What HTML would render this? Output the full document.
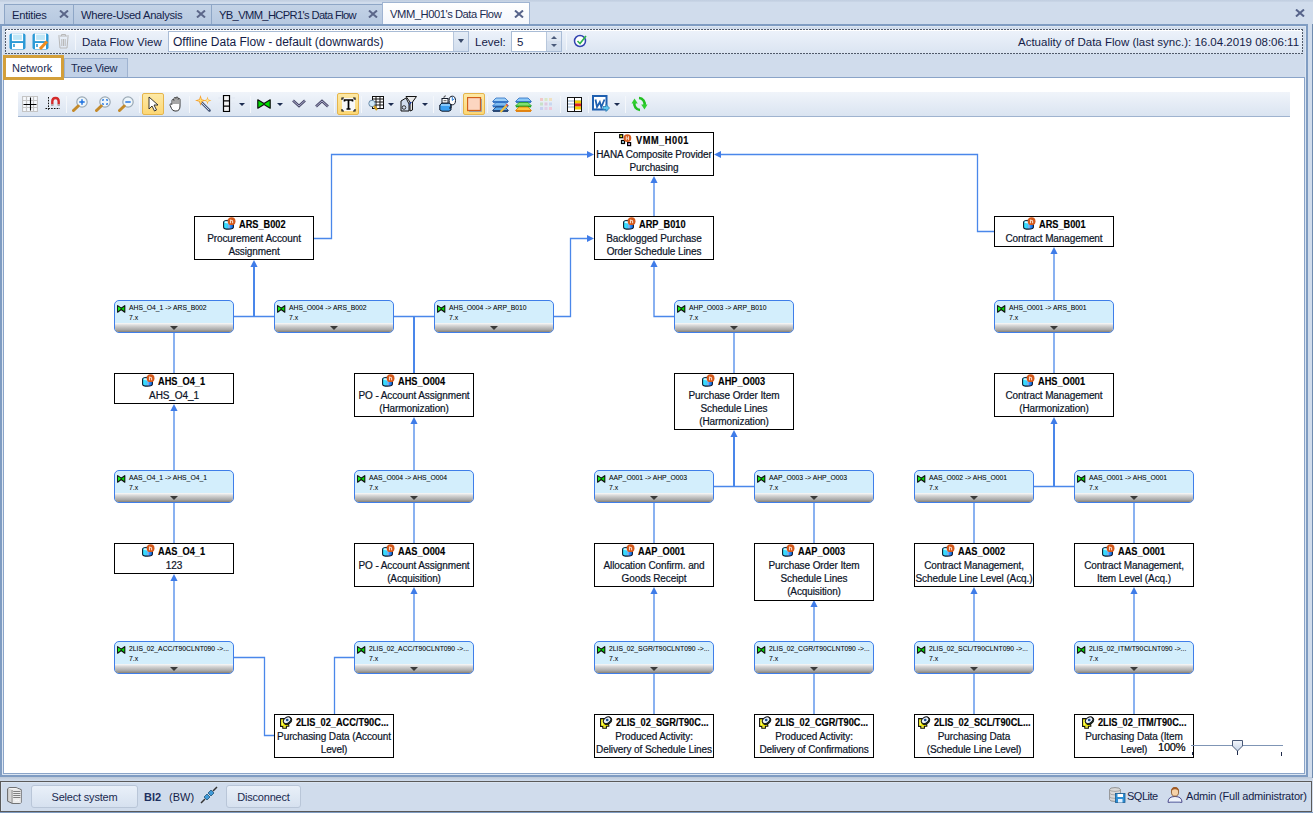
<!DOCTYPE html>
<html><head><meta charset="utf-8">
<style>
*{box-sizing:border-box;margin:0;padding:0}
html,body{width:1313px;height:813px;overflow:hidden}
body{position:relative;background:#d0dcec;font-family:"Liberation Sans",sans-serif;color:#1e2a4a}
.a{position:absolute}
/* tabs */
.tab{position:absolute;top:4px;height:21px;background:linear-gradient(#c3d2e6,#b6c8e0);border:1px solid #8ea6c6;border-bottom:none;font-size:11.2px;color:#141e4a;line-height:21px;padding-left:7px;white-space:nowrap}
.tab .x{position:absolute;top:5px}
.tab.act{top:2px;height:23px;background:linear-gradient(#ffffff,#f3f6fb);border-color:#9fb4d2;color:#1a2a50;line-height:23px}
/* panel */
#panel{position:absolute;left:0;top:24px;width:1308px;height:753px;border:2px solid #7f9cc2;background:#d0dcec;box-shadow:inset 0 0 0 1px #dce6f2}
#tb1{position:absolute;left:5px;top:29px;width:1298px;height:25px;background:repeating-linear-gradient(90deg,#505a6a 0 2px,transparent 2px 3px) left top/100% 1px no-repeat,repeating-linear-gradient(90deg,#505a6a 0 2px,transparent 2px 3px) left bottom/100% 1px no-repeat,repeating-linear-gradient(180deg,#505a6a 0 2px,transparent 2px 3px) left top/1px 100% no-repeat,repeating-linear-gradient(180deg,#505a6a 0 2px,transparent 2px 3px) right top/1px 100% no-repeat,linear-gradient(#ffffff,#ffffff) left 1px/100% 1px no-repeat,linear-gradient(#eef3fb,#dae4f1)}
.lbl{position:absolute;font-size:11.5px;color:#141c48;white-space:nowrap}
#combo{position:absolute;left:168px;top:31px;width:301px;height:21px;background:#fff;border:1px solid #a9bcd6}
#combo .dd{position:absolute;right:0;top:0;width:15px;height:19px;background:linear-gradient(#e4ecf6,#d2deee);border-left:1px solid #b7c7dc}
.tri{position:absolute;width:0;height:0;border-left:3.5px solid transparent;border-right:3.5px solid transparent;border-top:4px solid #3a4a6a}
#spin{position:absolute;left:511px;top:31px;width:51px;height:21px;background:#fff;border:1px solid #a9bcd6}
#spin .sb{position:absolute;right:0;top:0;width:15px;height:19px;background:linear-gradient(#e8eef7 0,#dde6f2 50%,#d6e0ee 50%,#d0dcec 100%);border-left:1px solid #b7c7dc}
.sep{position:absolute;width:1px;background:#a8b9d2;border-right:1px solid #f4f7fb}
/* view tabs */
#vtabs{position:absolute;left:2px;top:55px;width:1306px;height:23px}
#tnet{position:absolute;left:3px;top:55px;width:61px;height:25px;border:3px solid #d39f3a;background:#fff;font-size:11px;color:#1a2a50;line-height:20px;padding-left:6px;z-index:3}
#ttree{position:absolute;left:64px;top:58px;width:64px;height:20px;background:#c1d1e7;border:1px solid #9fb3d0;border-bottom:none;font-size:11px;color:#1a2a50;line-height:19px;padding-left:6px;letter-spacing:-0.3px}
#white{position:absolute;left:3px;top:77px;width:1302px;height:697px;background:#fff;border:1px solid #8aa4c8}
#tb2{position:absolute;left:18px;top:92px;width:1272px;height:25px;background:linear-gradient(#f0f4fa,#dae4f1);border-bottom:1px solid #9fb3cf}
.hl{position:absolute;top:93px;width:22px;height:22px;background:linear-gradient(#fde9a6,#fcd775);border:1px solid #e5b54c;border-radius:2px}
.ic2{position:absolute;top:96px}
/* diagram */
svg#ln{position:absolute;left:0;top:0}
svg#ln path{fill:none;stroke:#4a87ea;stroke-width:1.3}
svg#ln path.ah{fill:#3f7ce8;stroke:none}
svg#ln path.db{stroke-width:2;stroke:#4a87ea}
.nd{position:absolute;width:120px;background:#fff;border:1px solid #000;text-align:center;font-size:10px;color:#0c1428;line-height:13px;-webkit-text-stroke:0.2px #0c1428}
.nd .tt{height:15px;line-height:13px;padding-top:0px;white-space:nowrap}
.nd .tt b{display:inline-block;font-size:10px;color:#000;vertical-align:top;position:relative;top:0.5px;transform:scaleX(0.92);transform-origin:0 0;-webkit-text-stroke:0.15px #000}
.nd .ic{display:inline-block;vertical-align:top;margin-top:1px;margin-right:3px}
.nd .ds{white-space:nowrap;letter-spacing:-0.1px}
.tr{position:absolute;width:120px;height:33px;border:1px solid #3f7ee9;border-radius:5px;background:#d3eefc;overflow:hidden}
.tr .ti{position:absolute;left:2px;top:3.5px}
.tr .tl{position:absolute;left:14px;top:2px;font-size:6.8px;color:#000;white-space:nowrap;line-height:9px;-webkit-text-stroke:0.05px #000}
.tr .tv{position:absolute;left:14px;top:12px;font-size:6.8px;color:#000;line-height:9px;-webkit-text-stroke:0.05px #000}
.tr .tg{position:absolute;left:0;top:22px;width:118px;height:9px;background:linear-gradient(#fafafa,#d4d4d4 30%,#a8a8a8 75%,#8a8274)}
.tr .tg i{position:absolute;left:55px;top:3px;width:0;height:0;border-left:4px solid transparent;border-right:4px solid transparent;border-top:4px solid #3a3a3a}
/* status */
#status{position:absolute;left:0;top:781px;width:1312px;height:31px;border:1px solid #5a5a5a;background:#d0dcec;box-shadow:inset 1px 1px 0 #dbe5f1}
.btn{position:absolute;top:785px;height:23px;border:1px solid #b9c6d8;border-radius:3px;background:linear-gradient(#e9f0f9,#d6e1ef);font-size:11px;color:#1a2a50;text-align:center;line-height:22px;letter-spacing:-0.2px}
</style></head><body>
<!-- tabs -->
<div class="a" style="left:0;top:0;width:1313px;height:2px;background:linear-gradient(#c0cde0,#cad6e7)"></div>
<div class="tab" style="left:4px;width:70px;letter-spacing:-0.25px">Entities<svg class="x" style="left:54px" width="10" height="8" viewBox="0 0 10 8"><path d="M1 0.5 L9 7.5 M9 0.5 L1 7.5" stroke="#5b6689" stroke-width="2"/></svg></div>
<div class="tab" style="left:73px;width:139px;letter-spacing:-0.3px">Where-Used Analysis<svg class="x" style="left:122px" width="10" height="8" viewBox="0 0 10 8"><path d="M1 0.5 L9 7.5 M9 0.5 L1 7.5" stroke="#5b6689" stroke-width="2"/></svg></div>
<div class="tab" style="left:211px;width:172px;letter-spacing:-0.65px">YB_VMM_HCPR1's Data Flow<svg class="x" style="left:156px" width="10" height="8" viewBox="0 0 10 8"><path d="M1 0.5 L9 7.5 M9 0.5 L1 7.5" stroke="#5b6689" stroke-width="2"/></svg></div>
<div class="tab act" style="left:382px;width:148px;letter-spacing:-0.45px">VMM_H001's Data Flow<svg class="x" style="left:131px;top:7px" width="10" height="8" viewBox="0 0 10 8"><path d="M1 0.5 L9 7.5 M9 0.5 L1 7.5" stroke="#56638a" stroke-width="2"/></svg></div>
<svg class="a" style="left:1295px;top:9px" width="10" height="8" viewBox="0 0 10 8"><path d="M1 0.5 L9 7.5 M9 0.5 L1 7.5" stroke="#56638a" stroke-width="2"/></svg>
<div class="a" style="left:1312px;top:24px;width:1px;height:754px;background:#6f8cb0"></div>

<div id="panel"></div>
<div id="tb1"></div>
<!-- save icons -->
<svg class="a" style="left:9px;top:33px" width="17" height="17" viewBox="0 0 17 17"><rect x="0.5" y="0.5" width="16" height="16" rx="2" fill="#2c9ad6"/><rect x="3.5" y="1" width="10" height="6.5" fill="#bfe6f7" stroke="#fff" stroke-width="1.2"/><rect x="3" y="10" width="11" height="6" fill="#fff"/><rect x="4.2" y="11" width="1.6" height="3" fill="#2c9ad6"/></svg>
<svg class="a" style="left:32px;top:33px" width="17" height="17" viewBox="0 0 17 17"><rect x="0.5" y="0.5" width="16" height="16" rx="2" fill="#2c9ad6"/><rect x="3.5" y="1" width="10" height="6.5" fill="#bfe6f7" stroke="#fff" stroke-width="1.2"/><rect x="3" y="10" width="11" height="6" fill="#fff"/><rect x="4.2" y="11" width="1.6" height="3" fill="#2c9ad6"/><path d="M8 16 L15 8.5" stroke="#f08c1c" stroke-width="3"/></svg>
<svg class="a" style="left:57px;top:33px" width="13" height="16" viewBox="0 0 13 16"><path d="M1 3 H12 M4.5 3 V1.5 H8.5 V3 M2 4 L3 15 H10 L11 4 M4.8 6 V13 M6.5 6 V13 M8.2 6 V13" stroke="#b8b8b8" stroke-width="1" fill="none"/></svg>
<div class="sep" style="left:75px;top:33px;height:17px"></div>
<div class="lbl" style="left:82px;top:36px">Data Flow View</div>
<div id="combo"><div class="lbl" style="left:4px;top:3px;font-size:12px">Offline Data Flow - default (downwards)</div><div class="dd"><div class="tri" style="left:4px;top:7px"></div></div></div>
<div class="lbl" style="left:475px;top:36px">Level:</div>
<div id="spin"><div class="lbl" style="left:5px;top:4px;font-size:11.5px">5</div><div class="sb"><div class="tri" style="left:4px;top:4px;border-top:none;border-bottom:3px solid #4a5a7a;border-left-width:3px;border-right-width:3px"></div><div class="tri" style="left:4px;top:12px;border-top-width:3px;border-top-color:#4a5a7a;border-left-width:3px;border-right-width:3px"></div></div></div>
<div class="sep" style="left:566px;top:33px;height:17px"></div>
<svg class="a" style="left:573px;top:33px" width="15" height="15" viewBox="0 0 15 15"><circle cx="7" cy="8" r="5.5" fill="#fff" stroke="#3244b0" stroke-width="1.5"/><path d="M4.5 8 L7 10.5 L13 3" stroke="#2db44a" stroke-width="1.6" fill="none"/></svg>
<div class="lbl" style="left:1018px;top:36px;font-size:11.5px">Actuality of Data Flow (last sync.): 16.04.2019 08:06:11</div>

<div id="ttree">Tree View</div>
<div id="white"></div>
<div id="tnet">Network</div>

<!-- diagram toolbar -->
<div id="tb2"></div>
<svg class="a" style="left:22px;top:96px" width="16" height="16" viewBox="0 0 16 16"><rect x="0.5" y="0.5" width="15" height="15" fill="#f6f9fd"/><path d="M0.5 0.5 H15.5 V15.5 H0.5 Z M4.5 0.5 V15.5 M11.5 0.5 V15.5 M0.5 4.5 H15.5 M0.5 11.5 H15.5" stroke="#c4c4c4" stroke-width="1.2" fill="none"/><path d="M8.5 1.5 V14.5 M1.5 8.5 H14.5" stroke="#000" stroke-width="1.1"/></svg>
<svg class="a" style="left:45px;top:96px" width="16" height="16" viewBox="0 0 16 16"><path d="M3.5 1 V15 M0.5 12.5 H15" stroke="#111" stroke-width="1" stroke-dasharray="1.6 1.2" fill="none"/><path d="M7.3 8.5 V5.5 Q7.3 2 10.5 2 Q13.7 2 13.7 5.5 V8.5" stroke="#d42a2a" stroke-width="2.4" fill="none"/><path d="M7.3 8.2 V10 M13.7 8.2 V10" stroke="#a8a8a8" stroke-width="2.4"/></svg>
<div class="sep" style="left:66px;top:96px;height:17px"></div>
<svg class="a" style="left:72px;top:96px" width="16" height="16" viewBox="0 0 16 16"><circle cx="10" cy="6" r="5.2" fill="#eef6fb" stroke="#9aa8b4" stroke-width="1.2"/><path d="M6.2 10 L1.5 14.5" stroke="#c48a2a" stroke-width="3" stroke-linecap="round"/><path d="M10 3.3 V8.7 M7.3 6 H12.7" stroke="#1a6fe0" stroke-width="1.4"/></svg>
<svg class="a" style="left:95px;top:96px" width="16" height="16" viewBox="0 0 16 16"><circle cx="10" cy="6" r="5.2" fill="#eef6fb" stroke="#9aa8b4" stroke-width="1.2"/><path d="M6.2 10 L1.5 14.5" stroke="#c48a2a" stroke-width="3" stroke-linecap="round"/><path d="M7.8 5 V3.8 H9 M11 3.8 H12.2 V5 M12.2 7 V8.2 H11 M9 8.2 H7.8 V7" stroke="#1a6fe0" stroke-width="1.1" fill="none"/></svg>
<svg class="a" style="left:118px;top:96px" width="16" height="16" viewBox="0 0 16 16"><circle cx="10" cy="6" r="5.2" fill="#eef6fb" stroke="#9aa8b4" stroke-width="1.2"/><path d="M6.2 10 L1.5 14.5" stroke="#c48a2a" stroke-width="3" stroke-linecap="round"/><path d="M7.3 6 H12.7" stroke="#1a6fe0" stroke-width="1.4"/></svg>
<div class="sep" style="left:139px;top:96px;height:17px"></div>
<div class="hl" style="left:142px"></div>
<svg class="a" style="left:146px;top:96px" width="14" height="16" viewBox="0 0 14 16"><path d="M3 1 L3 13 L6 10 L8.5 15 L10.5 14 L8 9 L12 9 Z" fill="#fff" stroke="#222" stroke-width="0.9"/></svg>
<svg class="a" style="left:169px;top:96px" width="14" height="16" viewBox="0 0 14 16"><path d="M3 8.5 L3 4.5 Q3 3.5 4 3.5 Q5 3.5 5 4.5 L5 2.5 Q5 1.5 6 1.5 Q7 1.5 7 2.5 L7 2 Q7 1 8 1 Q9 1 9 2 L9 3.5 Q9 2.5 10 2.5 Q11 2.5 11 3.5 L11 10 Q11 15 7 15 L6 15 Q3.5 15 2.5 12.5 L1 9.2 Q0.7 8.2 1.5 8 Q2.4 7.8 3 8.5 Z" fill="#fff" stroke="#222" stroke-width="0.9"/><path d="M5 4.5 V8 M7 2.5 V8 M9 3.5 V8" stroke="#222" stroke-width="0.8"/></svg>
<div class="sep" style="left:189px;top:96px;height:17px"></div>
<svg class="a" style="left:195px;top:95px" width="17" height="17" viewBox="0 0 17 17"><path d="M6 7 L14.5 15.5" stroke="#4a5a7a" stroke-width="2.6" stroke-linecap="round"/><path d="M6 7 L14 15" stroke="#c8d4ea" stroke-width="1"/><path d="M5.5 0 L6.8 4.2 L11 5.5 L6.8 6.8 L5.5 11 L4.2 6.8 L0 5.5 L4.2 4.2 Z" fill="#f6a030"/><path d="M5.5 2.5 L6.2 4.8 L8.5 5.5 L6.2 6.2 L5.5 8.5 L4.8 6.2 L2.5 5.5 L4.8 4.8 Z" fill="#ffe070"/><path d="M12.5 1.5 L13.4 4.6 L16.5 5.5 L13.4 6.4 L12.5 9.5 L11.6 6.4 L8.5 5.5 L11.6 4.6 Z" fill="#f8b040"/><path d="M12.5 3.5 L13 5 L14.5 5.5 L13 6 L12.5 7.5 L12 6 L10.5 5.5 L12 5 Z" fill="#fff0a0"/></svg>
<svg class="a" style="left:218px;top:95px" width="17" height="17" viewBox="0 0 17 17"><path d="M0.5 3 H4 M13 3 H16.5 M0.5 8.5 H4 M13 8.5 H16.5 M0.5 14 H4 M13 14 H16.5" stroke="#e4eaf4" stroke-width="1.2"/><path d="M1.5 2 L0.5 3 L1.5 4 M15.5 2 L16.5 3 L15.5 4 M1.5 7.5 L0.5 8.5 L1.5 9.5 M15.5 7.5 L16.5 8.5 L15.5 9.5 M1.5 13 L0.5 14 L1.5 15 M15.5 13 L16.5 14 L15.5 15" stroke="#e4eaf4" stroke-width="1" fill="none"/><rect x="5.5" y="0.5" width="6" height="16" fill="#f4f4f4" stroke="#000" stroke-width="1.2"/><path d="M5.5 5.8 H11.5 M5.5 11.2 H11.5" stroke="#000" stroke-width="1.2"/></svg>
<div class="tri" style="left:239px;top:103px;border-left-width:3px;border-right-width:3px;border-top-width:3px;border-top-color:#1c2c50"></div>
<div class="sep" style="left:250px;top:96px;height:17px"></div>
<svg class="a" style="left:257px;top:99px" width="14" height="10" viewBox="0 0 14 10"><path d="M0.8 0.8 L7 4.6 L13.2 0.8 L13.2 9.2 L7 5.4 L0.8 9.2 Z" fill="#00e000" stroke="#111" stroke-width="1.2" stroke-linejoin="round"/></svg>
<div class="tri" style="left:277px;top:103px;border-left-width:3px;border-right-width:3px;border-top-width:3px;border-top-color:#1c2c50"></div>
<svg class="a" style="left:292px;top:99px" width="14" height="9" viewBox="0 0 14 9"><path d="M1 1.5 L7 7 L13 1.5" stroke="#4a4a6a" stroke-width="2.6" fill="none"/><path d="M1 1.5 L7 7 L13 1.5" stroke="#a8a8c8" stroke-width="1" fill="none"/></svg>
<svg class="a" style="left:315px;top:99px" width="14" height="9" viewBox="0 0 14 9"><path d="M1 7.5 L7 2 L13 7.5" stroke="#4a4a6a" stroke-width="2.6" fill="none"/><path d="M1 7.5 L7 2 L13 7.5" stroke="#a8a8c8" stroke-width="1" fill="none"/></svg>
<div class="sep" style="left:334px;top:96px;height:17px"></div>
<div class="hl" style="left:337px"></div>
<svg class="a" style="left:341px;top:97px" width="15" height="15" viewBox="0 0 15 15"><rect x="1" y="1" width="13" height="13" fill="#f8f8f8"/><path d="M1 3 V1 H3 M12 1 H14 V3 M14 12 V14 H12 M3 14 H1 V12" stroke="#111" stroke-width="1.2" fill="none"/><path d="M3.5 4.5 V3 H11.5 V4.5 M7.5 3 V12 M5.5 12 H9.5" stroke="#000" stroke-width="1.7" fill="none"/></svg>
<div class="sep" style="left:361px;top:96px;height:17px"></div>
<svg class="a" style="left:368px;top:96px" width="16" height="16" viewBox="0 0 16 16"><rect x="4.5" y="0.5" width="11" height="12" fill="#fff" stroke="#111" stroke-width="1"/><path d="M4.5 3 H15.5 M4.5 6 H15.5 M4.5 9 H15.5 M8 0.5 V12.5 M12 0.5 V12.5" stroke="#111" stroke-width="1"/><circle cx="4" cy="7.5" r="3.2" fill="#cfe8f6" stroke="#6a8aa8" stroke-width="1"/><path d="M6 10 L9 14" stroke="#d0a020" stroke-width="2.2"/></svg>
<div class="tri" style="left:388px;top:103px;border-left-width:3px;border-right-width:3px;border-top-width:3px;border-top-color:#1c2c50"></div>
<svg class="a" style="left:400px;top:96px" width="17" height="16" viewBox="0 0 17 16"><path d="M1 5 L6 2 L9 8 V15 H1 Z" fill="#d0dcec" stroke="#111" stroke-width="1"/><circle cx="4" cy="11.5" r="1.8" fill="none" stroke="#333" stroke-width="1"/><path d="M6 0.5 H16.5 L12.5 6 V14 L10 15 V6 Z" fill="#e8e8e8" stroke="#111" stroke-width="1"/><path d="M10 6 L12 6 L9 10Z" fill="#1a3a9a"/></svg>
<div class="tri" style="left:422px;top:103px;border-left-width:3px;border-right-width:3px;border-top-width:3px;border-top-color:#1c2c50"></div>
<div class="sep" style="left:433px;top:96px;height:17px"></div>
<svg class="a" style="left:439px;top:95px" width="17" height="17" viewBox="0 0 17 17"><path d="M0.8 10 L3 8 H10 L12 10 V15 L10 16.2 H3 L0.8 15 Z" fill="#3a9ef0" stroke="#101828" stroke-width="1"/><path d="M2 10 H11" stroke="#bfe4ff" stroke-width="1.2"/><rect x="3" y="3.5" width="6" height="4.5" fill="#fff" stroke="#101828" stroke-width="1"/><path d="M4.5 5.7 H7.5" stroke="#333" stroke-width="0.8"/><path d="M5 3.5 V1.5 L7 0.8" stroke="#333" stroke-width="0.8" fill="none"/><ellipse cx="13.3" cy="5.5" rx="3.2" ry="4.3" fill="#fff" stroke="#101828" stroke-width="1"/><path d="M13.3 2 V5.5 L15.5 3.5" stroke="#2a80e0" stroke-width="1" fill="none"/><path d="M12 9.5 V13 H10" stroke="#101828" stroke-width="1" fill="none"/></svg>
<div class="sep" style="left:460px;top:96px;height:17px"></div>
<div class="hl" style="left:463px"></div>
<svg class="a" style="left:467px;top:97px" width="15" height="15" viewBox="0 0 15 15"><rect x="0.5" y="0.5" width="13" height="13" fill="#fcd6c0" stroke="#d2601a" stroke-width="1.3"/><path d="M2 14.5 H14.5 V2" stroke="#a0a0a0" stroke-width="1" fill="none"/></svg>
<div class="sep" style="left:487px;top:96px;height:17px"></div>
<svg class="a" style="left:492px;top:97px" width="17" height="16" viewBox="0 0 17 16"><path d="M4 1 H13 L16.5 4.5 H0.5 Z" fill="#9fd0f8" stroke="#2a6cc0" stroke-width="0.8"/><path d="M1 5.2 H16" stroke="#2a6cc0" stroke-width="1.4"/><path d="M4 5.5 H13 L16.5 9 H0.5 Z" fill="#7fbcf0" stroke="#2a6cc0" stroke-width="0.8"/><path d="M1 9.7 H16" stroke="#2a6cc0" stroke-width="1.4"/><path d="M4 10 H13 L16.5 13.5 H0.5 Z" fill="#5aa8ec" stroke="#1a3a6a" stroke-width="0.8"/><path d="M1 14.2 H16" stroke="#1a3a6a" stroke-width="1.4"/><path d="M8.5 15 L15 8" stroke="#f0c040" stroke-width="2"/><path d="M14.5 8.5 L15.5 7.5" stroke="#e04040" stroke-width="2"/></svg>
<svg class="a" style="left:515px;top:97px" width="17" height="16" viewBox="0 0 17 16"><path d="M4 1 H13 L16.5 4.5 H0.5 Z" fill="#8cc8f8" stroke="#2a6cc0" stroke-width="0.8"/><path d="M1 5.2 H16" stroke="#2a6cc0" stroke-width="1.4"/><path d="M4 5.5 H13 L16.5 9 H0.5 Z" fill="#80e070" stroke="#20a020" stroke-width="0.8"/><path d="M1 9.7 H16" stroke="#20a020" stroke-width="1.4"/><path d="M4 10 H13 L16.5 13.5 H0.5 Z" fill="#ffc840" stroke="#e07a00" stroke-width="0.8"/><path d="M1 14.2 H16" stroke="#e07a00" stroke-width="1.4"/></svg>
<svg class="a" style="left:540px;top:98px" width="12" height="12" viewBox="0 0 12 12"><rect x="0" y="0" width="3" height="3" fill="#f0c8c8"/><rect x="4.5" y="0" width="3" height="3" fill="#d8e8c8"/><rect x="9" y="0" width="3" height="3" fill="#f0e0c0"/><rect x="0" y="4.5" width="3" height="3" fill="#c8e0c8"/><rect x="4.5" y="4.5" width="3" height="3" fill="#e0c8e0"/><rect x="9" y="4.5" width="3" height="3" fill="#c8d8f0"/><rect x="0" y="9" width="3" height="3" fill="#c8d0f0"/><rect x="4.5" y="9" width="3" height="3" fill="#e0d0e8"/><rect x="9" y="9" width="3" height="3" fill="#f0c8d8"/></svg>
<div class="sep" style="left:560px;top:96px;height:17px"></div>
<svg class="a" style="left:567px;top:97px" width="15" height="15" viewBox="0 0 15 15"><rect x="0.5" y="0.5" width="14" height="14" fill="#fff" stroke="#111" stroke-width="1"/><path d="M1 4 H14 M1 7 H14 M1 10 H14" stroke="#8aa8c8" stroke-width="1"/><rect x="8" y="3.5" width="6" height="3" fill="#f0d000"/><rect x="8" y="6.5" width="6" height="3" fill="#e02020"/><rect x="8" y="9.5" width="6" height="3" fill="#f0d000"/><path d="M7.5 1 V14" stroke="#111" stroke-width="1"/></svg>
<div class="sep" style="left:588px;top:96px;height:17px"></div>
<svg class="a" style="left:592px;top:95px" width="18" height="17" viewBox="0 0 18 17"><rect x="1" y="1" width="13.5" height="13.5" fill="#fff" stroke="#1e5fb0" stroke-width="2"/><path d="M3.5 4.5 L5 12 L7.8 7 L9.3 12 L12.5 4.5" stroke="#1e5fb0" stroke-width="1.8" fill="none"/><path d="M11 11.5 H14 V9.5 L17.5 13 L14 16.5 V14.5 H11 Z" fill="#60c8f0" stroke="#2a7ab0" stroke-width="0.8"/></svg>
<div class="tri" style="left:614px;top:103px;border-left-width:3px;border-right-width:3px;border-top-width:3px;border-top-color:#1c2c50"></div>
<div class="sep" style="left:625px;top:96px;height:17px"></div>
<svg class="a" style="left:631px;top:96px" width="17" height="16" viewBox="0 0 17 16"><path d="M9 14 A6 6 0 0 1 3.5 6.5" stroke="#22c022" stroke-width="2.6" fill="none"/><path d="M0.5 7.5 L3.5 2.5 L6.8 7.5 Z" fill="#30d030"/><path d="M8 2 A6 6 0 0 1 13.5 9.5" stroke="#22c022" stroke-width="2.6" fill="none"/><path d="M10.2 8.5 L13.5 13.5 L16.5 8.5 Z" fill="#30d030"/></svg>

<svg id="ln" width="1313" height="813">
<defs><linearGradient id="cyl" x1="0" x2="1" y1="0" y2="0"><stop offset="0" stop-color="#30f0ff"/><stop offset="0.45" stop-color="#40c8ff"/><stop offset="0.55" stop-color="#a0b0e0"/><stop offset="0.7" stop-color="#2a8cff"/><stop offset="1" stop-color="#1060d0"/></linearGradient></defs><path class="db" d="M254 316.5 L254 264"/>
<path class="db" d="M414 316.5 L414 373"/>
<path class="db" d="M734 486.5 L734 434"/>
<path class="db" d="M1054 486.5 L1054 421"/>
<path d="M313.5 238.5 L331.5 238.5 L331.5 154.5 L590 154.5"/>
<path d="M654 216 L654 180"/>
<path d="M994 231.5 L977.5 231.5 L977.5 154.5 L719 154.5"/>
<path d="M233.5 316.5 L274 316.5"/>
<path d="M254 316.5 L254 264"/>
<path d="M553.5 316.5 L570.5 316.5 L570.5 238.5 L590 238.5"/>
<path d="M674 316.5 L654 316.5 L654 264"/>
<path d="M1054 300 L1054 251"/>
<path d="M174 333 L174 373"/>
<path d="M393.5 316.5 L434 316.5"/>
<path d="M414 316.5 L414 373"/>
<path d="M734 333 L734 373"/>
<path d="M1054 333 L1054 373"/>
<path d="M174 470 L174 408"/>
<path d="M414 470 L414 421"/>
<path d="M713.5 486.5 L754 486.5"/>
<path d="M734 486.5 L734 434"/>
<path d="M1033.5 486.5 L1074 486.5"/>
<path d="M1054 486.5 L1054 421"/>
<path d="M174 503 L174 543"/>
<path d="M414 503 L414 543"/>
<path d="M654 503 L654 543"/>
<path d="M814 503 L814 543"/>
<path d="M974 503 L974 543"/>
<path d="M1134 503 L1134 543"/>
<path d="M174 641 L174 578"/>
<path d="M414 641 L414 591"/>
<path d="M654 641 L654 591"/>
<path d="M814 641 L814 604"/>
<path d="M974 641 L974 591"/>
<path d="M1134 641 L1134 591"/>
<path d="M233.5 657.5 L264.5 657.5 L264.5 735.5 L274 735.5"/>
<path d="M354 657.5 L334.5 657.5 L334.5 714"/>
<path d="M654 674 L654 714"/>
<path d="M814 674 L814 714"/>
<path d="M974 674 L974 714"/>
<path d="M1134 674 L1134 714"/>
<path class="ah" d="M594 154.5 L587 150.9 L587 158.1 Z"/>
<path class="ah" d="M654 176 L650.4 183 L657.6 183 Z"/>
<path class="ah" d="M714 154.5 L721 150.9 L721 158.1 Z"/>
<path class="ah" d="M254 260 L250.4 267 L257.6 267 Z"/>
<path class="ah" d="M594 238.5 L587 234.9 L587 242.1 Z"/>
<path class="ah" d="M654 260 L650.4 267 L657.6 267 Z"/>
<path class="ah" d="M1054 247 L1050.4 254 L1057.6 254 Z"/>
<path class="ah" d="M174 404 L170.4 411 L177.6 411 Z"/>
<path class="ah" d="M414 417 L410.4 424 L417.6 424 Z"/>
<path class="ah" d="M734 430 L730.4 437 L737.6 437 Z"/>
<path class="ah" d="M1054 417 L1050.4 424 L1057.6 424 Z"/>
<path class="ah" d="M174 574 L170.4 581 L177.6 581 Z"/>
<path class="ah" d="M414 587 L410.4 594 L417.6 594 Z"/>
<path class="ah" d="M654 587 L650.4 594 L657.6 594 Z"/>
<path class="ah" d="M814 600 L810.4 607 L817.6 607 Z"/>
<path class="ah" d="M974 587 L970.4 594 L977.6 594 Z"/>
<path class="ah" d="M1134 587 L1130.4 594 L1137.6 594 Z"/>
</svg>
<div class="nd" style="left:594px;top:132px;height:44px"><div class="tt"><svg class="ic" width="14" height="13" viewBox="0 0 14 13"><rect x="0.7" y="0.7" width="3" height="3" fill="#f4f020" stroke="#000" stroke-width="1.2"/><rect x="2.5" y="6.5" width="3" height="3" fill="#b0e4f8" stroke="#000" stroke-width="1.2"/><rect x="8.6" y="8.6" width="3" height="3" fill="#d8b0f0" stroke="#000" stroke-width="1.2"/><circle cx="8.4" cy="4.1" r="3.9" fill="#d4581a"/><path d="M7.3 6.2 V2.2 M9.5 6.2 V2.2 M7.3 4.2 H9.5" stroke="#f4d8c4" stroke-width="1" fill="none"/></svg><b style="margin-right:-4.61px;letter-spacing:0.6px">VMM_H001</b></div><div class="ds">HANA Composite Provider</div><div class="ds">Purchasing</div></div>
<div class="nd" style="left:194px;top:216px;height:44px"><div class="tt"><svg class="ic" style="margin-top:0" width="13" height="13" viewBox="0 0 13 13"><path d="M0.6 5.2 Q0.6 3.2 5.5 3.2 Q10.4 3.2 10.4 5.2 L10.4 10.2 Q10.4 12.1 5.5 12.1 Q0.6 12.1 0.6 10.2 Z" fill="url(#cyl)" stroke="#0a1a30" stroke-width="1.1"/><path d="M1.6 5.3 Q1.6 4.2 5.5 4.2 Q9.4 4.2 9.4 5.3 Q9.4 6.4 5.5 6.4 Q1.6 6.4 1.6 5.3Z" fill="#e0f4ff"/><circle cx="8.6" cy="4.2" r="3.9" fill="#d4581a"/><path d="M7.5 6.3 V2.6 M7.5 3.9 Q7.8 3.2 8.6 3.2 Q9.6 3.2 9.6 4.2 V6.3" stroke="#f4d8c4" stroke-width="1.1" fill="none"/></svg><b style="margin-right:-4.05px">ARS_B002</b></div><div class="ds">Procurement Account</div><div class="ds">Assignment</div></div>
<div class="nd" style="left:594px;top:216px;height:44px"><div class="tt"><svg class="ic" style="margin-top:0" width="13" height="13" viewBox="0 0 13 13"><path d="M0.6 5.2 Q0.6 3.2 5.5 3.2 Q10.4 3.2 10.4 5.2 L10.4 10.2 Q10.4 12.1 5.5 12.1 Q0.6 12.1 0.6 10.2 Z" fill="url(#cyl)" stroke="#0a1a30" stroke-width="1.1"/><path d="M1.6 5.3 Q1.6 4.2 5.5 4.2 Q9.4 4.2 9.4 5.3 Q9.4 6.4 5.5 6.4 Q1.6 6.4 1.6 5.3Z" fill="#e0f4ff"/><circle cx="8.6" cy="4.2" r="3.9" fill="#d4581a"/><path d="M7.5 6.3 V2.6 M7.5 3.9 Q7.8 3.2 8.6 3.2 Q9.6 3.2 9.6 4.2 V6.3" stroke="#f4d8c4" stroke-width="1.1" fill="none"/></svg><b style="margin-right:-4.05px">ARP_B010</b></div><div class="ds">Backlogged Purchase</div><div class="ds">Order Schedule Lines</div></div>
<div class="nd" style="left:994px;top:216px;height:31px"><div class="tt"><svg class="ic" style="margin-top:0" width="13" height="13" viewBox="0 0 13 13"><path d="M0.6 5.2 Q0.6 3.2 5.5 3.2 Q10.4 3.2 10.4 5.2 L10.4 10.2 Q10.4 12.1 5.5 12.1 Q0.6 12.1 0.6 10.2 Z" fill="url(#cyl)" stroke="#0a1a30" stroke-width="1.1"/><path d="M1.6 5.3 Q1.6 4.2 5.5 4.2 Q9.4 4.2 9.4 5.3 Q9.4 6.4 5.5 6.4 Q1.6 6.4 1.6 5.3Z" fill="#e0f4ff"/><circle cx="8.6" cy="4.2" r="3.9" fill="#d4581a"/><path d="M7.5 6.3 V2.6 M7.5 3.9 Q7.8 3.2 8.6 3.2 Q9.6 3.2 9.6 4.2 V6.3" stroke="#f4d8c4" stroke-width="1.1" fill="none"/></svg><b style="margin-right:-4.05px">ARS_B001</b></div><div class="ds">Contract Management</div></div>
<div class="nd" style="left:114px;top:373px;height:31px"><div class="tt"><svg class="ic" style="margin-top:0" width="13" height="13" viewBox="0 0 13 13"><path d="M0.6 5.2 Q0.6 3.2 5.5 3.2 Q10.4 3.2 10.4 5.2 L10.4 10.2 Q10.4 12.1 5.5 12.1 Q0.6 12.1 0.6 10.2 Z" fill="url(#cyl)" stroke="#0a1a30" stroke-width="1.1"/><path d="M1.6 5.3 Q1.6 4.2 5.5 4.2 Q9.4 4.2 9.4 5.3 Q9.4 6.4 5.5 6.4 Q1.6 6.4 1.6 5.3Z" fill="#e0f4ff"/><circle cx="8.6" cy="4.2" r="3.9" fill="#d4581a"/><path d="M7.5 6.3 V2.6 M7.5 3.9 Q7.8 3.2 8.6 3.2 Q9.6 3.2 9.6 4.2 V6.3" stroke="#f4d8c4" stroke-width="1.1" fill="none"/></svg><b style="margin-right:-4.09px">AHS_O4_1</b></div><div class="ds">AHS_O4_1</div></div>
<div class="nd" style="left:354px;top:373px;height:44px"><div class="tt"><svg class="ic" style="margin-top:0" width="13" height="13" viewBox="0 0 13 13"><path d="M0.6 5.2 Q0.6 3.2 5.5 3.2 Q10.4 3.2 10.4 5.2 L10.4 10.2 Q10.4 12.1 5.5 12.1 Q0.6 12.1 0.6 10.2 Z" fill="url(#cyl)" stroke="#0a1a30" stroke-width="1.1"/><path d="M1.6 5.3 Q1.6 4.2 5.5 4.2 Q9.4 4.2 9.4 5.3 Q9.4 6.4 5.5 6.4 Q1.6 6.4 1.6 5.3Z" fill="#e0f4ff"/><circle cx="8.6" cy="4.2" r="3.9" fill="#d4581a"/><path d="M7.5 6.3 V2.6 M7.5 3.9 Q7.8 3.2 8.6 3.2 Q9.6 3.2 9.6 4.2 V6.3" stroke="#f4d8c4" stroke-width="1.1" fill="none"/></svg><b style="margin-right:-4.09px">AHS_O004</b></div><div class="ds">PO - Account Assignment</div><div class="ds">(Harmonization)</div></div>
<div class="nd" style="left:674px;top:373px;height:57px"><div class="tt"><svg class="ic" style="margin-top:0" width="13" height="13" viewBox="0 0 13 13"><path d="M0.6 5.2 Q0.6 3.2 5.5 3.2 Q10.4 3.2 10.4 5.2 L10.4 10.2 Q10.4 12.1 5.5 12.1 Q0.6 12.1 0.6 10.2 Z" fill="url(#cyl)" stroke="#0a1a30" stroke-width="1.1"/><path d="M1.6 5.3 Q1.6 4.2 5.5 4.2 Q9.4 4.2 9.4 5.3 Q9.4 6.4 5.5 6.4 Q1.6 6.4 1.6 5.3Z" fill="#e0f4ff"/><circle cx="8.6" cy="4.2" r="3.9" fill="#d4581a"/><path d="M7.5 6.3 V2.6 M7.5 3.9 Q7.8 3.2 8.6 3.2 Q9.6 3.2 9.6 4.2 V6.3" stroke="#f4d8c4" stroke-width="1.1" fill="none"/></svg><b style="margin-right:-4.09px">AHP_O003</b></div><div class="ds">Purchase Order Item</div><div class="ds">Schedule Lines</div><div class="ds">(Harmonization)</div></div>
<div class="nd" style="left:994px;top:373px;height:44px"><div class="tt"><svg class="ic" style="margin-top:0" width="13" height="13" viewBox="0 0 13 13"><path d="M0.6 5.2 Q0.6 3.2 5.5 3.2 Q10.4 3.2 10.4 5.2 L10.4 10.2 Q10.4 12.1 5.5 12.1 Q0.6 12.1 0.6 10.2 Z" fill="url(#cyl)" stroke="#0a1a30" stroke-width="1.1"/><path d="M1.6 5.3 Q1.6 4.2 5.5 4.2 Q9.4 4.2 9.4 5.3 Q9.4 6.4 5.5 6.4 Q1.6 6.4 1.6 5.3Z" fill="#e0f4ff"/><circle cx="8.6" cy="4.2" r="3.9" fill="#d4581a"/><path d="M7.5 6.3 V2.6 M7.5 3.9 Q7.8 3.2 8.6 3.2 Q9.6 3.2 9.6 4.2 V6.3" stroke="#f4d8c4" stroke-width="1.1" fill="none"/></svg><b style="margin-right:-4.09px">AHS_O001</b></div><div class="ds">Contract Management</div><div class="ds">(Harmonization)</div></div>
<div class="nd" style="left:114px;top:543px;height:31px"><div class="tt"><svg class="ic" style="margin-top:0" width="13" height="13" viewBox="0 0 13 13"><path d="M0.6 5.2 Q0.6 3.2 5.5 3.2 Q10.4 3.2 10.4 5.2 L10.4 10.2 Q10.4 12.1 5.5 12.1 Q0.6 12.1 0.6 10.2 Z" fill="url(#cyl)" stroke="#0a1a30" stroke-width="1.1"/><path d="M1.6 5.3 Q1.6 4.2 5.5 4.2 Q9.4 4.2 9.4 5.3 Q9.4 6.4 5.5 6.4 Q1.6 6.4 1.6 5.3Z" fill="#e0f4ff"/><circle cx="8.6" cy="4.2" r="3.9" fill="#d4581a"/><path d="M7.5 6.3 V2.6 M7.5 3.9 Q7.8 3.2 8.6 3.2 Q9.6 3.2 9.6 4.2 V6.3" stroke="#f4d8c4" stroke-width="1.1" fill="none"/></svg><b style="margin-right:-4.09px">AAS_O4_1</b></div><div class="ds">123</div></div>
<div class="nd" style="left:354px;top:543px;height:44px"><div class="tt"><svg class="ic" style="margin-top:0" width="13" height="13" viewBox="0 0 13 13"><path d="M0.6 5.2 Q0.6 3.2 5.5 3.2 Q10.4 3.2 10.4 5.2 L10.4 10.2 Q10.4 12.1 5.5 12.1 Q0.6 12.1 0.6 10.2 Z" fill="url(#cyl)" stroke="#0a1a30" stroke-width="1.1"/><path d="M1.6 5.3 Q1.6 4.2 5.5 4.2 Q9.4 4.2 9.4 5.3 Q9.4 6.4 5.5 6.4 Q1.6 6.4 1.6 5.3Z" fill="#e0f4ff"/><circle cx="8.6" cy="4.2" r="3.9" fill="#d4581a"/><path d="M7.5 6.3 V2.6 M7.5 3.9 Q7.8 3.2 8.6 3.2 Q9.6 3.2 9.6 4.2 V6.3" stroke="#f4d8c4" stroke-width="1.1" fill="none"/></svg><b style="margin-right:-4.09px">AAS_O004</b></div><div class="ds">PO - Account Assignment</div><div class="ds">(Acquisition)</div></div>
<div class="nd" style="left:594px;top:543px;height:44px"><div class="tt"><svg class="ic" style="margin-top:0" width="13" height="13" viewBox="0 0 13 13"><path d="M0.6 5.2 Q0.6 3.2 5.5 3.2 Q10.4 3.2 10.4 5.2 L10.4 10.2 Q10.4 12.1 5.5 12.1 Q0.6 12.1 0.6 10.2 Z" fill="url(#cyl)" stroke="#0a1a30" stroke-width="1.1"/><path d="M1.6 5.3 Q1.6 4.2 5.5 4.2 Q9.4 4.2 9.4 5.3 Q9.4 6.4 5.5 6.4 Q1.6 6.4 1.6 5.3Z" fill="#e0f4ff"/><circle cx="8.6" cy="4.2" r="3.9" fill="#d4581a"/><path d="M7.5 6.3 V2.6 M7.5 3.9 Q7.8 3.2 8.6 3.2 Q9.6 3.2 9.6 4.2 V6.3" stroke="#f4d8c4" stroke-width="1.1" fill="none"/></svg><b style="margin-right:-4.09px">AAP_O001</b></div><div class="ds">Allocation Confirm. and</div><div class="ds">Goods Receipt</div></div>
<div class="nd" style="left:754px;top:543px;height:58px"><div class="tt"><svg class="ic" style="margin-top:0" width="13" height="13" viewBox="0 0 13 13"><path d="M0.6 5.2 Q0.6 3.2 5.5 3.2 Q10.4 3.2 10.4 5.2 L10.4 10.2 Q10.4 12.1 5.5 12.1 Q0.6 12.1 0.6 10.2 Z" fill="url(#cyl)" stroke="#0a1a30" stroke-width="1.1"/><path d="M1.6 5.3 Q1.6 4.2 5.5 4.2 Q9.4 4.2 9.4 5.3 Q9.4 6.4 5.5 6.4 Q1.6 6.4 1.6 5.3Z" fill="#e0f4ff"/><circle cx="8.6" cy="4.2" r="3.9" fill="#d4581a"/><path d="M7.5 6.3 V2.6 M7.5 3.9 Q7.8 3.2 8.6 3.2 Q9.6 3.2 9.6 4.2 V6.3" stroke="#f4d8c4" stroke-width="1.1" fill="none"/></svg><b style="margin-right:-4.09px">AAP_O003</b></div><div class="ds">Purchase Order Item</div><div class="ds">Schedule Lines</div><div class="ds">(Acquisition)</div></div>
<div class="nd" style="left:914px;top:543px;height:44px"><div class="tt"><svg class="ic" style="margin-top:0" width="13" height="13" viewBox="0 0 13 13"><path d="M0.6 5.2 Q0.6 3.2 5.5 3.2 Q10.4 3.2 10.4 5.2 L10.4 10.2 Q10.4 12.1 5.5 12.1 Q0.6 12.1 0.6 10.2 Z" fill="url(#cyl)" stroke="#0a1a30" stroke-width="1.1"/><path d="M1.6 5.3 Q1.6 4.2 5.5 4.2 Q9.4 4.2 9.4 5.3 Q9.4 6.4 5.5 6.4 Q1.6 6.4 1.6 5.3Z" fill="#e0f4ff"/><circle cx="8.6" cy="4.2" r="3.9" fill="#d4581a"/><path d="M7.5 6.3 V2.6 M7.5 3.9 Q7.8 3.2 8.6 3.2 Q9.6 3.2 9.6 4.2 V6.3" stroke="#f4d8c4" stroke-width="1.1" fill="none"/></svg><b style="margin-right:-4.09px">AAS_O002</b></div><div class="ds">Contract Management,</div><div class="ds">Schedule Line Level (Acq.)</div></div>
<div class="nd" style="left:1074px;top:543px;height:44px"><div class="tt"><svg class="ic" style="margin-top:0" width="13" height="13" viewBox="0 0 13 13"><path d="M0.6 5.2 Q0.6 3.2 5.5 3.2 Q10.4 3.2 10.4 5.2 L10.4 10.2 Q10.4 12.1 5.5 12.1 Q0.6 12.1 0.6 10.2 Z" fill="url(#cyl)" stroke="#0a1a30" stroke-width="1.1"/><path d="M1.6 5.3 Q1.6 4.2 5.5 4.2 Q9.4 4.2 9.4 5.3 Q9.4 6.4 5.5 6.4 Q1.6 6.4 1.6 5.3Z" fill="#e0f4ff"/><circle cx="8.6" cy="4.2" r="3.9" fill="#d4581a"/><path d="M7.5 6.3 V2.6 M7.5 3.9 Q7.8 3.2 8.6 3.2 Q9.6 3.2 9.6 4.2 V6.3" stroke="#f4d8c4" stroke-width="1.1" fill="none"/></svg><b style="margin-right:-4.09px">AAS_O001</b></div><div class="ds">Contract Management,</div><div class="ds">Item Level (Acq.)</div></div>
<div class="nd" style="left:274px;top:714px;height:44px"><div class="tt"><svg class="ic" width="13" height="13" viewBox="0 0 13 13"><path d="M0.6 2.6 H4.6 L8.8 8.6 V10.2 H6.4 V12.2 H2.8 V10.4 H0.6 Z" fill="#f6f000" stroke="#111" stroke-width="1.1"/><path d="M1.6 4 H3.2 V9.5 H1.6Z" fill="#ffff60"/><path d="M3.6 10.8 H5.6" stroke="#c8c8a0" stroke-width="1"/><ellipse cx="7.8" cy="4.9" rx="4.3" ry="3.1" transform="rotate(-35 7.8 4.9)" fill="#20503a" stroke="#111" stroke-width="1"/><ellipse cx="7.1" cy="4.2" rx="4.1" ry="2.9" transform="rotate(-35 7.1 4.2)" fill="#e6eef8" stroke="#111" stroke-width="1"/><circle cx="7.2" cy="4" r="1.35" fill="#1a4a8a"/></svg><b style="margin-right:-8.05px">2LIS_02_ACC/T90C...</b></div><div class="ds">Purchasing Data (Account</div><div class="ds">Level)</div></div>
<div class="nd" style="left:594px;top:714px;height:44px"><div class="tt"><svg class="ic" width="13" height="13" viewBox="0 0 13 13"><path d="M0.6 2.6 H4.6 L8.8 8.6 V10.2 H6.4 V12.2 H2.8 V10.4 H0.6 Z" fill="#f6f000" stroke="#111" stroke-width="1.1"/><path d="M1.6 4 H3.2 V9.5 H1.6Z" fill="#ffff60"/><path d="M3.6 10.8 H5.6" stroke="#c8c8a0" stroke-width="1"/><ellipse cx="7.8" cy="4.9" rx="4.3" ry="3.1" transform="rotate(-35 7.8 4.9)" fill="#20503a" stroke="#111" stroke-width="1"/><ellipse cx="7.1" cy="4.2" rx="4.1" ry="2.9" transform="rotate(-35 7.1 4.2)" fill="#e6eef8" stroke="#111" stroke-width="1"/><circle cx="7.2" cy="4" r="1.35" fill="#1a4a8a"/></svg><b style="margin-right:-8.05px">2LIS_02_SGR/T90C...</b></div><div class="ds">Produced Activity:</div><div class="ds">Delivery of Schedule Lines</div></div>
<div class="nd" style="left:754px;top:714px;height:44px"><div class="tt"><svg class="ic" width="13" height="13" viewBox="0 0 13 13"><path d="M0.6 2.6 H4.6 L8.8 8.6 V10.2 H6.4 V12.2 H2.8 V10.4 H0.6 Z" fill="#f6f000" stroke="#111" stroke-width="1.1"/><path d="M1.6 4 H3.2 V9.5 H1.6Z" fill="#ffff60"/><path d="M3.6 10.8 H5.6" stroke="#c8c8a0" stroke-width="1"/><ellipse cx="7.8" cy="4.9" rx="4.3" ry="3.1" transform="rotate(-35 7.8 4.9)" fill="#20503a" stroke="#111" stroke-width="1"/><ellipse cx="7.1" cy="4.2" rx="4.1" ry="2.9" transform="rotate(-35 7.1 4.2)" fill="#e6eef8" stroke="#111" stroke-width="1"/><circle cx="7.2" cy="4" r="1.35" fill="#1a4a8a"/></svg><b style="margin-right:-8.09px">2LIS_02_CGR/T90C...</b></div><div class="ds">Produced Activity:</div><div class="ds">Delivery of Confirmations</div></div>
<div class="nd" style="left:914px;top:714px;height:44px"><div class="tt"><svg class="ic" width="13" height="13" viewBox="0 0 13 13"><path d="M0.6 2.6 H4.6 L8.8 8.6 V10.2 H6.4 V12.2 H2.8 V10.4 H0.6 Z" fill="#f6f000" stroke="#111" stroke-width="1.1"/><path d="M1.6 4 H3.2 V9.5 H1.6Z" fill="#ffff60"/><path d="M3.6 10.8 H5.6" stroke="#c8c8a0" stroke-width="1"/><ellipse cx="7.8" cy="4.9" rx="4.3" ry="3.1" transform="rotate(-35 7.8 4.9)" fill="#20503a" stroke="#111" stroke-width="1"/><ellipse cx="7.1" cy="4.2" rx="4.1" ry="2.9" transform="rotate(-35 7.1 4.2)" fill="#e6eef8" stroke="#111" stroke-width="1"/><circle cx="7.2" cy="4" r="1.35" fill="#1a4a8a"/></svg><b style="margin-right:-8.40px">2LIS_02_SCL/T90CL...</b></div><div class="ds">Purchasing Data</div><div class="ds">(Schedule Line Level)</div></div>
<div class="nd" style="left:1074px;top:714px;height:44px"><div class="tt"><svg class="ic" width="13" height="13" viewBox="0 0 13 13"><path d="M0.6 2.6 H4.6 L8.8 8.6 V10.2 H6.4 V12.2 H2.8 V10.4 H0.6 Z" fill="#f6f000" stroke="#111" stroke-width="1.1"/><path d="M1.6 4 H3.2 V9.5 H1.6Z" fill="#ffff60"/><path d="M3.6 10.8 H5.6" stroke="#c8c8a0" stroke-width="1"/><ellipse cx="7.8" cy="4.9" rx="4.3" ry="3.1" transform="rotate(-35 7.8 4.9)" fill="#20503a" stroke="#111" stroke-width="1"/><ellipse cx="7.1" cy="4.2" rx="4.1" ry="2.9" transform="rotate(-35 7.1 4.2)" fill="#e6eef8" stroke="#111" stroke-width="1"/><circle cx="7.2" cy="4" r="1.35" fill="#1a4a8a"/></svg><b style="margin-right:-7.69px">2LIS_02_ITM/T90C...</b></div><div class="ds">Purchasing Data (Item</div><div class="ds">Level)</div></div>
<div class="tr" style="left:114px;top:300px"><svg class="ti" width="9" height="8" viewBox="0 0 9 8"><path d="M0.6 0.6 L4.2 3.3 L7.8 0.6 L7.8 7.2 L4.2 4.5 L0.6 7.2 Z" fill="#00e000" stroke="#101010" stroke-width="1.1" stroke-linejoin="round"/><path d="M1.2 1.5 L3.6 3.6 L1.2 6 Z" fill="#20f020"/></svg><div class="tl">AHS_O4_1 -&gt; ARS_B002</div><div class="tv">7.x</div><div class="tg"><i></i></div></div>
<div class="tr" style="left:274px;top:300px"><svg class="ti" width="9" height="8" viewBox="0 0 9 8"><path d="M0.6 0.6 L4.2 3.3 L7.8 0.6 L7.8 7.2 L4.2 4.5 L0.6 7.2 Z" fill="#00e000" stroke="#101010" stroke-width="1.1" stroke-linejoin="round"/><path d="M1.2 1.5 L3.6 3.6 L1.2 6 Z" fill="#20f020"/></svg><div class="tl">AHS_O004 -&gt; ARS_B002</div><div class="tv">7.x</div><div class="tg"><i></i></div></div>
<div class="tr" style="left:434px;top:300px"><svg class="ti" width="9" height="8" viewBox="0 0 9 8"><path d="M0.6 0.6 L4.2 3.3 L7.8 0.6 L7.8 7.2 L4.2 4.5 L0.6 7.2 Z" fill="#00e000" stroke="#101010" stroke-width="1.1" stroke-linejoin="round"/><path d="M1.2 1.5 L3.6 3.6 L1.2 6 Z" fill="#20f020"/></svg><div class="tl">AHS_O004 -&gt; ARP_B010</div><div class="tv">7.x</div><div class="tg"><i></i></div></div>
<div class="tr" style="left:674px;top:300px"><svg class="ti" width="9" height="8" viewBox="0 0 9 8"><path d="M0.6 0.6 L4.2 3.3 L7.8 0.6 L7.8 7.2 L4.2 4.5 L0.6 7.2 Z" fill="#00e000" stroke="#101010" stroke-width="1.1" stroke-linejoin="round"/><path d="M1.2 1.5 L3.6 3.6 L1.2 6 Z" fill="#20f020"/></svg><div class="tl">AHP_O003 -&gt; ARP_B010</div><div class="tv">7.x</div><div class="tg"><i></i></div></div>
<div class="tr" style="left:994px;top:300px"><svg class="ti" width="9" height="8" viewBox="0 0 9 8"><path d="M0.6 0.6 L4.2 3.3 L7.8 0.6 L7.8 7.2 L4.2 4.5 L0.6 7.2 Z" fill="#00e000" stroke="#101010" stroke-width="1.1" stroke-linejoin="round"/><path d="M1.2 1.5 L3.6 3.6 L1.2 6 Z" fill="#20f020"/></svg><div class="tl">AHS_O001 -&gt; ARS_B001</div><div class="tv">7.x</div><div class="tg"><i></i></div></div>
<div class="tr" style="left:114px;top:470px"><svg class="ti" width="9" height="8" viewBox="0 0 9 8"><path d="M0.6 0.6 L4.2 3.3 L7.8 0.6 L7.8 7.2 L4.2 4.5 L0.6 7.2 Z" fill="#00e000" stroke="#101010" stroke-width="1.1" stroke-linejoin="round"/><path d="M1.2 1.5 L3.6 3.6 L1.2 6 Z" fill="#20f020"/></svg><div class="tl">AAS_O4_1 -&gt; AHS_O4_1</div><div class="tv">7.x</div><div class="tg"><i></i></div></div>
<div class="tr" style="left:354px;top:470px"><svg class="ti" width="9" height="8" viewBox="0 0 9 8"><path d="M0.6 0.6 L4.2 3.3 L7.8 0.6 L7.8 7.2 L4.2 4.5 L0.6 7.2 Z" fill="#00e000" stroke="#101010" stroke-width="1.1" stroke-linejoin="round"/><path d="M1.2 1.5 L3.6 3.6 L1.2 6 Z" fill="#20f020"/></svg><div class="tl">AAS_O004 -&gt; AHS_O004</div><div class="tv">7.x</div><div class="tg"><i></i></div></div>
<div class="tr" style="left:594px;top:470px"><svg class="ti" width="9" height="8" viewBox="0 0 9 8"><path d="M0.6 0.6 L4.2 3.3 L7.8 0.6 L7.8 7.2 L4.2 4.5 L0.6 7.2 Z" fill="#00e000" stroke="#101010" stroke-width="1.1" stroke-linejoin="round"/><path d="M1.2 1.5 L3.6 3.6 L1.2 6 Z" fill="#20f020"/></svg><div class="tl">AAP_O001 -&gt; AHP_O003</div><div class="tv">7.x</div><div class="tg"><i></i></div></div>
<div class="tr" style="left:754px;top:470px"><svg class="ti" width="9" height="8" viewBox="0 0 9 8"><path d="M0.6 0.6 L4.2 3.3 L7.8 0.6 L7.8 7.2 L4.2 4.5 L0.6 7.2 Z" fill="#00e000" stroke="#101010" stroke-width="1.1" stroke-linejoin="round"/><path d="M1.2 1.5 L3.6 3.6 L1.2 6 Z" fill="#20f020"/></svg><div class="tl">AAP_O003 -&gt; AHP_O003</div><div class="tv">7.x</div><div class="tg"><i></i></div></div>
<div class="tr" style="left:914px;top:470px"><svg class="ti" width="9" height="8" viewBox="0 0 9 8"><path d="M0.6 0.6 L4.2 3.3 L7.8 0.6 L7.8 7.2 L4.2 4.5 L0.6 7.2 Z" fill="#00e000" stroke="#101010" stroke-width="1.1" stroke-linejoin="round"/><path d="M1.2 1.5 L3.6 3.6 L1.2 6 Z" fill="#20f020"/></svg><div class="tl">AAS_O002 -&gt; AHS_O001</div><div class="tv">7.x</div><div class="tg"><i></i></div></div>
<div class="tr" style="left:1074px;top:470px"><svg class="ti" width="9" height="8" viewBox="0 0 9 8"><path d="M0.6 0.6 L4.2 3.3 L7.8 0.6 L7.8 7.2 L4.2 4.5 L0.6 7.2 Z" fill="#00e000" stroke="#101010" stroke-width="1.1" stroke-linejoin="round"/><path d="M1.2 1.5 L3.6 3.6 L1.2 6 Z" fill="#20f020"/></svg><div class="tl">AAS_O001 -&gt; AHS_O001</div><div class="tv">7.x</div><div class="tg"><i></i></div></div>
<div class="tr" style="left:114px;top:641px"><svg class="ti" width="9" height="8" viewBox="0 0 9 8"><path d="M0.6 0.6 L4.2 3.3 L7.8 0.6 L7.8 7.2 L4.2 4.5 L0.6 7.2 Z" fill="#00e000" stroke="#101010" stroke-width="1.1" stroke-linejoin="round"/><path d="M1.2 1.5 L3.6 3.6 L1.2 6 Z" fill="#20f020"/></svg><div class="tl">2LIS_02_ACC/T90CLNT090 -&gt;...</div><div class="tv">7.x</div><div class="tg"><i></i></div></div>
<div class="tr" style="left:354px;top:641px"><svg class="ti" width="9" height="8" viewBox="0 0 9 8"><path d="M0.6 0.6 L4.2 3.3 L7.8 0.6 L7.8 7.2 L4.2 4.5 L0.6 7.2 Z" fill="#00e000" stroke="#101010" stroke-width="1.1" stroke-linejoin="round"/><path d="M1.2 1.5 L3.6 3.6 L1.2 6 Z" fill="#20f020"/></svg><div class="tl">2LIS_02_ACC/T90CLNT090 -&gt;...</div><div class="tv">7.x</div><div class="tg"><i></i></div></div>
<div class="tr" style="left:594px;top:641px"><svg class="ti" width="9" height="8" viewBox="0 0 9 8"><path d="M0.6 0.6 L4.2 3.3 L7.8 0.6 L7.8 7.2 L4.2 4.5 L0.6 7.2 Z" fill="#00e000" stroke="#101010" stroke-width="1.1" stroke-linejoin="round"/><path d="M1.2 1.5 L3.6 3.6 L1.2 6 Z" fill="#20f020"/></svg><div class="tl">2LIS_02_SGR/T90CLNT090 -&gt;...</div><div class="tv">7.x</div><div class="tg"><i></i></div></div>
<div class="tr" style="left:754px;top:641px"><svg class="ti" width="9" height="8" viewBox="0 0 9 8"><path d="M0.6 0.6 L4.2 3.3 L7.8 0.6 L7.8 7.2 L4.2 4.5 L0.6 7.2 Z" fill="#00e000" stroke="#101010" stroke-width="1.1" stroke-linejoin="round"/><path d="M1.2 1.5 L3.6 3.6 L1.2 6 Z" fill="#20f020"/></svg><div class="tl">2LIS_02_CGR/T90CLNT090 -&gt;...</div><div class="tv">7.x</div><div class="tg"><i></i></div></div>
<div class="tr" style="left:914px;top:641px"><svg class="ti" width="9" height="8" viewBox="0 0 9 8"><path d="M0.6 0.6 L4.2 3.3 L7.8 0.6 L7.8 7.2 L4.2 4.5 L0.6 7.2 Z" fill="#00e000" stroke="#101010" stroke-width="1.1" stroke-linejoin="round"/><path d="M1.2 1.5 L3.6 3.6 L1.2 6 Z" fill="#20f020"/></svg><div class="tl">2LIS_02_SCL/T90CLNT090 -&gt;...</div><div class="tv">7.x</div><div class="tg"><i></i></div></div>
<div class="tr" style="left:1074px;top:641px"><svg class="ti" width="9" height="8" viewBox="0 0 9 8"><path d="M0.6 0.6 L4.2 3.3 L7.8 0.6 L7.8 7.2 L4.2 4.5 L0.6 7.2 Z" fill="#00e000" stroke="#101010" stroke-width="1.1" stroke-linejoin="round"/><path d="M1.2 1.5 L3.6 3.6 L1.2 6 Z" fill="#20f020"/></svg><div class="tl">2LIS_02_ITM/T90CLNT090 -&gt;...</div><div class="tv">7.x</div><div class="tg"><i></i></div></div>

<!-- zoom slider -->
<div class="a" style="left:1158px;top:741px;font-size:11px;color:#000;letter-spacing:-0.2px;-webkit-text-stroke:0.2px #000">100%</div>
<div class="a" style="left:1191px;top:745px;width:92px;height:1px;background:#7f95b5"></div>
<div class="a" style="left:1192px;top:752px;width:1px;height:3px;background:#1e2a4a"></div>
<div class="a" style="left:1237px;top:751px;width:1px;height:4px;background:#1e2a4a"></div>
<div class="a" style="left:1281px;top:752px;width:1px;height:4px;background:#1e2a4a"></div>
<svg class="a" style="left:1232px;top:740px" width="12" height="12" viewBox="0 0 12 12"><defs><linearGradient id="sg" x1="0" y1="0" x2="0" y2="1"><stop offset="0" stop-color="#f4f7fc"/><stop offset="1" stop-color="#c6d4e8"/></linearGradient></defs><path d="M0.5 0.5 H10.5 V6 L5.5 11 L0.5 6 Z" fill="url(#sg)" stroke="#4a5a78" stroke-width="1"/></svg>

<!-- status bar -->
<div class="a" style="left:0;top:777px;width:1312px;height:4px;background:linear-gradient(#bcc8d8,#d0dcec)"></div>
<div class="a" style="left:0;top:812px;width:1313px;height:1px;background:#7f9cc2"></div>
<div id="status"></div>
<svg class="a" style="left:7px;top:787px" width="15" height="17" viewBox="0 0 15 17"><path d="M0.6 1.8 L2.2 0.6 H9 L14.2 2.6 V15.6 L12.8 16.4 H5.2 L0.6 14.2 Z" fill="#d6d6d6" stroke="#5a5a5a" stroke-width="0.9"/><path d="M1.2 1.6 L2.4 1 H8.8 L13.6 2.8 H5.4 Z" fill="#f2f2f2"/><path d="M5.2 3 V16.2" stroke="#6a6a6a" stroke-width="0.9"/><rect x="5.6" y="3.2" width="8.2" height="12.8" fill="#ececec"/><path d="M6.2 4.5 H13.4 M6.2 6.5 H13.4 M6.2 8.5 H13.4 M6.2 10.5 H13.4" stroke="#808080" stroke-width="1"/><path d="M8.5 13.5 H9.5 M10.8 13.5 H11.8" stroke="#fff" stroke-width="1.2"/></svg>
<div class="btn" style="left:31px;width:107px">Select system</div>
<div class="lbl" style="left:144px;top:791px;font-weight:bold;color:#1e3060;font-size:11px">BI2</div>
<div class="lbl" style="left:169px;top:791px;font-size:11px">(BW)</div>
<svg class="a" style="left:200px;top:786px" width="18" height="18" viewBox="0 0 18 18"><path d="M1 17 L5 13 M13 5 L17 1" stroke="#333" stroke-width="1.5"/><path d="M4 11 L7 8 L10 11 L7 14 Z M8 7 L11 4 L14 7 L11 10 Z" fill="#3e9ad8" stroke="#23557a" stroke-width="0.8"/></svg>
<div class="btn" style="left:226px;width:75px">Disconnect</div>
<svg class="a" style="left:1109px;top:787px" width="17" height="16" viewBox="0 0 17 16"><path d="M0.6 2.5 Q0.6 0.6 6 0.6 Q11.4 0.6 11.4 2.5 V12.5 Q11.4 14.4 6 14.4 Q0.6 14.4 0.6 12.5 Z" fill="#d8d8d8" stroke="#8a8a8a" stroke-width="0.9"/><path d="M0.6 2.5 Q0.6 4.4 6 4.4 Q11.4 4.4 11.4 2.5 M0.6 6 Q0.6 7.9 6 7.9 Q11.4 7.9 11.4 6 M0.6 9.5 Q0.6 11.4 6 11.4 Q11.4 11.4 11.4 9.5" stroke="#9a9a9a" stroke-width="0.8" fill="none"/><rect x="6.5" y="6.5" width="9.5" height="9" fill="#2d8fd5" stroke="#1a5a90" stroke-width="0.8"/><rect x="8.5" y="7" width="5.5" height="3" fill="#fff"/><rect x="9" y="12" width="4.5" height="3.5" fill="#dfefff"/></svg>
<div class="lbl" style="left:1127px;top:790px;font-size:11px;letter-spacing:-0.5px">SQLite</div>
<svg class="a" style="left:1167px;top:786px" width="16" height="17" viewBox="0 0 16 17"><path d="M1 16.3 Q1 10.5 8 10.5 Q15 10.5 15 16.3 Z" fill="#eef2fa" stroke="#4a4a8a" stroke-width="1"/><path d="M3 16 H13" stroke="#9aa8d0" stroke-width="1"/><ellipse cx="8" cy="6" rx="3.6" ry="4.2" fill="#f6d2a8" stroke="#7a4a20" stroke-width="0.8"/><path d="M4.2 5.5 Q4 1.2 8 1 Q12 1.2 11.8 5.5 Q10.5 3 8 3.2 Q5.5 3 4.2 5.5 Z" fill="#a05a24"/></svg>
<div class="lbl" style="left:1186px;top:790px;font-size:11px;letter-spacing:-0.2px">Admin (Full administrator)</div>
</body></html>
